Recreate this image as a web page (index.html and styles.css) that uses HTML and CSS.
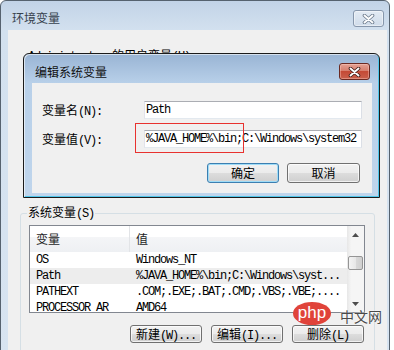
FILE: index.html
```html
<!DOCTYPE html>
<html>
<head>
<meta charset="utf-8">
<title>环境变量</title>
<link rel="stylesheet" href="styles.css">
</head>
<body>
<div class="win">
  <div class="win-title">
    <span class="win-title-text">环境变量</span>
    <span class="cap-btn cap-btn-inactive">
      <svg width="13" height="10" viewBox="0 0 13 10"><path d="M2.5 1.5l8 7M10.5 1.5l-8 7" stroke="#6c7b8d" stroke-width="3.6" stroke-linecap="round"/><path d="M2.5 1.5l8 7M10.5 1.5l-8 7" stroke="#fff" stroke-width="1.9" stroke-linecap="round"/></svg>
    </span>
  </div>
  <div class="win-body">
    <div class="user-area">
      <div class="user-label"><span class="m">Administrator </span>的用户变量<span class="m">(U)</span></div>
    </div>
    <fieldset class="group">
      <legend class="group-label">系统变量<span class="m">(S)</span></legend>
      <div class="list">
        <div class="lv">
          <div class="lv-head"><div class="c1">变量</div><div class="c2">值</div></div>
          <div class="lv-row"><div class="c1 m">OS</div><div class="c2 m">Windows_NT</div></div>
          <div class="lv-row sel"><div class="c1 m">Path</div><div class="c2 m">%JAVA_HOME%\bin;C:\Windows\syst...</div></div>
          <div class="lv-row"><div class="c1 m">PATHEXT</div><div class="c2 m">.COM;.EXE;.BAT;.CMD;.VBS;.VBE;....</div></div>
          <div class="lv-row"><div class="c1 m">PROCESSOR_AR</div><div class="c2 m">AMD64</div></div>
        </div>
        <div class="sb">
          <div class="sb-btn"><svg width="7" height="4" viewBox="0 0 7 4"><path d="M0 4h7L3.5 0z" fill="#4d4d4d"/></svg></div>
          <div class="sb-track"><div class="sb-thumb"></div></div>
          <div class="sb-btn"><svg width="7" height="4" viewBox="0 0 7 4"><path d="M0 0h7L3.5 4z" fill="#4d4d4d"/></svg></div>
        </div>
      </div>
      <div class="btn-row">
        <button class="btn">新建<span class="m">(W)...</span></button>
        <button class="btn">编辑<span class="m">(I)...</span></button>
        <button class="btn">删除<span class="m">(L)</span></button>
      </div>
    </fieldset>
  </div>

  <div class="dlg">
    <div class="dlg-title">
      <span class="dlg-title-text">编辑系统变量</span>
      <span class="cap-btn cap-btn-close">
        <svg width="13" height="10" viewBox="0 0 13 10"><path d="M2.5 1.5l8 7M10.5 1.5l-8 7" stroke="#3d1a16" stroke-width="3.6" stroke-linecap="round"/><path d="M2.5 1.5l8 7M10.5 1.5l-8 7" stroke="#fff" stroke-width="1.9" stroke-linecap="round"/></svg>
      </span>
    </div>
    <div class="dlg-body">
      <div class="form">
        <label class="form-label">变量名<span class="m">(N):</span></label>
        <div class="field m">Path</div>
        <label class="form-label">变量值<span class="m">(V):</span></label>
        <div class="field m">%JAVA_HOME%\bin;C:\Windows\system32</div>
      </div>
      <div class="dlg-btns">
        <button class="btn btn-default btn-lg">确定</button>
        <button class="btn btn-lg btn-wide">取消</button>
      </div>
    </div>
    <div class="mark"></div>
  </div>

  <div class="wm"><span class="wm-php">php</span><span class="wm-cn">中文网</span></div>
</div>
</body>
</html>
```

FILE: styles.css
```css
* { box-sizing: border-box; }
html, body { margin: 0; background: #fff; }
body {
  width: 394px;
  height: 350px;
  overflow: hidden;
  font-family: "Noto Sans CJK SC", sans-serif;
  font-size: 12px;
  line-height: 16px;
  color: #000;
}
.m {
  font-family: "Liberation Mono", monospace;
  font-size: 12px;
  letter-spacing: -1.2px;
}

/* outer window */
.win {
  position: relative;
  width: 390px;
  height: 370px;
  border: 1px solid #56626f;
  border-radius: 6px 6px 0 0;
  background: linear-gradient(#c2d3e7, #d3e1ef 30px, #d8e4f1);
}
.win-title {
  height: 29px;
  display: flex;
  justify-content: space-between;
  align-items: flex-start;
  padding: 9px 5px 0 11px;
}
.win-title-text { color: #36414d; }
.cap-btn {
  display: flex;
  align-items: center;
  justify-content: center;
  width: 31px;
  height: 17px;
  border-radius: 3px;
}
.cap-btn-inactive {
  border: 1px solid #8797ac;
  background: linear-gradient(#e3ebf4, #d0dcea);
  box-shadow: inset 0 0 0 1px rgba(255,255,255,.45);
}
.win-body {
  margin: 0 2px 0 7px;
  height: 340px;
  background: #f0f0f0;
  padding: 0 12px;
}
.user-area {
  height: 174px;
  padding: 17px 0 0 8px;
}

/* group box */
.group {
  margin: 0;
  padding: 3px 9px 0 8px;
  min-width: 0;
  height: 150px;
  border: 1px solid #d5dfe5;
  border-radius: 3px;
}
.group-label {
  padding: 0 1px;
  margin-left: -2px;
  line-height: 16px;
}

/* list view */
.list {
  display: flex;
  height: 88px;
  border: 1px solid #828790;
  background: #fff;
}
.lv { flex: 1; overflow: hidden; }
.lv-head {
  display: flex;
  height: 26px;
  background: linear-gradient(#fff 0, #fff 44%, #f4f5f7 44%, #eef0f3 100%);
  color: #1e1e1e;
}
.lv-head div { line-height: 25px; }
.lv-head .c1 { border-right: 1px solid #e2e4e7; }
.c1 { width: 100px; flex: none; padding-left: 6px; white-space: nowrap; overflow: hidden; }
.c2 { padding-left: 6px; white-space: nowrap; }
.lv-row { display: flex; height: 16px; line-height: 16px; }
.lv-row.sel { background: #ededed; }

.sb {
  width: 17px;
  flex: none;
  display: flex;
  flex-direction: column;
  background: linear-gradient(90deg, #e7e7e7, #f5f5f5 25%, #f5f5f5);
}
.sb-btn { height: 17px; flex: none; display: flex; align-items: center; justify-content: center; }
.sb-track { flex: 1; }
.sb-thumb {
  margin: 13px 1px 0;
  height: 14px;
  border: 1px solid #959595;
  border-radius: 2px;
  background: linear-gradient(90deg, #f4f4f4, #e8e8e8 50%, #dadada 50%, #cfcfcf);
}

/* buttons */
.btn-row {
  display: flex;
  justify-content: flex-end;
  gap: 9px;
  margin-top: 12px;
  padding-right: 1px;
}
.btn {
  width: 72px;
  height: 18px;
  padding: 0;
  font: inherit;
  line-height: 16px;
  color: #000;
  border: 1px solid #707070;
  border-radius: 3px;
  background: linear-gradient(#f2f2f2 0, #ebebeb 50%, #dddddd 50%, #cfcfcf 100%);
  box-shadow: inset 0 0 0 1px rgba(255,255,255,.7);
}
.btn-lg { height: 20px; }
.btn-wide { width: 73px; }
.btn-default {
  border-color: #3c7fb1;
  box-shadow: inset 0 0 0 1px #9fdcf7;
}

/* edit dialog */
.dlg {
  position: absolute;
  left: 22px;
  top: 52px;
  width: 357px;
  height: 145px;
  display: flex;
  flex-direction: column;
  border: 1px solid #1b1b1b;
  border-radius: 6px 6px 0 0;
  background: linear-gradient(#99b4d4, #b8d0e9 29px, #bfd5ec);
  box-shadow: inset 1px 1px 0 rgba(255,255,255,.6), inset -1px -1px 0 #4fc6ea;
}
.dlg-title {
  height: 29px;
  flex: none;
  display: flex;
  justify-content: space-between;
  align-items: flex-start;
  padding: 9px 9px 0 11px;
}
.dlg-title-text { margin-top: 1px; color: #111; }
.cap-btn-close {
  border: 1px solid #6b2a22;
  background: linear-gradient(#e4a294 0, #d67e6d 45%, #c44a36 50%, #c9604c 100%);
  box-shadow: inset 0 0 0 1px rgba(255,210,200,.4);
}
.dlg-body {
  height: 110px;
  margin: 0 7px 0 8px;
  background: #f0f0f0;
  padding: 18px 10px 0 10px;
}
.form {
  display: grid;
  grid-template-columns: 102px 218px;
  row-gap: 9px;
}
.form-label { line-height: 18px; white-space: nowrap; }
.field {
  height: 18px;
  border: 1px solid #abadb3;
  border-color: #abadb3 #dbdfe6 #e3e9ef #e2e3ea;
  background: #fff;
  padding-left: 1px;
  line-height: 16px;
  white-space: nowrap;
  overflow: hidden;
}
.dlg-btns {
  display: flex;
  justify-content: flex-end;
  gap: 8px;
  margin-top: 13px;
  padding-right: 2px;
}
.mark {
  position: absolute;
  left: 111px;
  top: 69px;
  width: 109px;
  height: 30px;
  border: 1px solid #e8322f;
}

/* watermark */
.wm {
  position: absolute;
  left: 292px;
  top: 301px;
  display: flex;
  align-items: center;
}
.wm-php {
  width: 38px;
  height: 23px;
  border-radius: 50%;
  background: #e0433a;
  color: #fff;
  font-family: "Liberation Sans", sans-serif;
  font-size: 17px;
  line-height: 21px;
  text-align: center;
}
.wm-cn {
  margin-left: 9px;
  margin-top: 4px;
  font-size: 14px;
  line-height: 16px;
  color: #4a4a4a;
  text-shadow: 0 0 2px #fff;
}
```
